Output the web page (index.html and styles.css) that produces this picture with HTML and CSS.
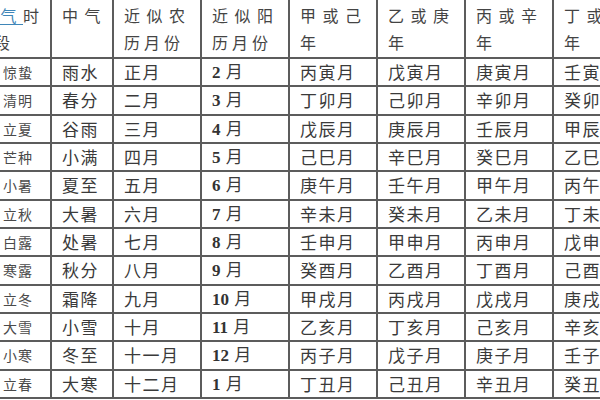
FILE: index.html
```html
<!DOCTYPE html>
<html lang="zh">
<head>
<meta charset="utf-8">
<title>节气月份表</title>
<link rel="stylesheet" href="styles.css">
</head>
<body>
<table class="grid">
  <colgroup>
    <col class="c-first">
    <col class="c-mid">
    <col class="c-std">
    <col class="c-std">
    <col class="c-std">
    <col class="c-std">
    <col class="c-std">
    <col class="c-std">
  </colgroup>
  <thead>
    <tr class="head">
      <th class="h-first"><span class="l1"><a class="link" href="#">节气</a>时</span><span class="l2 l2-first">段</span></th>
      <th><span class="l1">中气</span><span class="l2">&nbsp;</span></th>
      <th><span class="l1">近似农</span><span class="l2">历月份</span></th>
      <th><span class="l1">近似阳</span><span class="l2">历月份</span></th>
      <th><span class="l1">甲或己</span><span class="l2">年</span></th>
      <th><span class="l1">乙或庚</span><span class="l2">年</span></th>
      <th><span class="l1">丙或辛</span><span class="l2">年</span></th>
      <th><span class="l1">丁或戊</span><span class="l2">年</span></th>
    </tr>
  </thead>
  <tbody>
    <tr><td class="jie">惊蛰</td><td>雨水</td><td>正月</td><td><span class="num">2</span> 月</td><td>丙寅月</td><td>戊寅月</td><td>庚寅月</td><td>壬寅月</td></tr>
    <tr><td class="jie">清明</td><td>春分</td><td>二月</td><td><span class="num">3</span> 月</td><td>丁卯月</td><td>己卯月</td><td>辛卯月</td><td>癸卯月</td></tr>
    <tr><td class="jie">立夏</td><td>谷雨</td><td>三月</td><td><span class="num">4</span> 月</td><td>戊辰月</td><td>庚辰月</td><td>壬辰月</td><td>甲辰月</td></tr>
    <tr><td class="jie">芒种</td><td>小满</td><td>四月</td><td><span class="num">5</span> 月</td><td>己巳月</td><td>辛巳月</td><td>癸巳月</td><td>乙巳月</td></tr>
    <tr><td class="jie">小暑</td><td>夏至</td><td>五月</td><td><span class="num">6</span> 月</td><td>庚午月</td><td>壬午月</td><td>甲午月</td><td>丙午月</td></tr>
    <tr><td class="jie">立秋</td><td>大暑</td><td>六月</td><td><span class="num">7</span> 月</td><td>辛未月</td><td>癸未月</td><td>乙未月</td><td>丁未月</td></tr>
    <tr><td class="jie">白露</td><td>处暑</td><td>七月</td><td><span class="num">8</span> 月</td><td>壬申月</td><td>甲申月</td><td>丙申月</td><td>戊申月</td></tr>
    <tr><td class="jie">寒露</td><td>秋分</td><td>八月</td><td><span class="num">9</span> 月</td><td>癸酉月</td><td>乙酉月</td><td>丁酉月</td><td>己酉月</td></tr>
    <tr><td class="jie">立冬</td><td>霜降</td><td>九月</td><td><span class="num">10</span> 月</td><td>甲戌月</td><td>丙戌月</td><td>戊戌月</td><td>庚戌月</td></tr>
    <tr><td class="jie">大雪</td><td>小雪</td><td>十月</td><td><span class="num">11</span> 月</td><td>乙亥月</td><td>丁亥月</td><td>己亥月</td><td>辛亥月</td></tr>
    <tr><td class="jie">小寒</td><td>冬至</td><td>十一月</td><td><span class="num">12</span> 月</td><td>丙子月</td><td>戊子月</td><td>庚子月</td><td>壬子月</td></tr>
    <tr><td class="jie">立春</td><td>大寒</td><td>十二月</td><td><span class="num">1</span> 月</td><td>丁丑月</td><td>己丑月</td><td>辛丑月</td><td>癸丑月</td></tr>
  </tbody>
</table>
</body>
</html>
```

FILE: styles.css
```css
html, body {
  margin: 0;
  padding: 0;
  background: #ffffff;
  overflow: hidden;
}

body {
  font-family: "Noto Sans CJK SC", "Noto Sans CJK JP", sans-serif;
  color: #3a3a3a;
}

.grid {
  border-collapse: collapse;
  table-layout: fixed;
  width: 672px;
  margin-left: -34px;
  margin-top: -3px;
}

.c-first { width: 84px; }
.c-mid { width: 62px; }
.c-std { width: 88px; }

.grid th,
.grid td {
  border: 2px solid #5c5c5c;
  padding: 0 0 0 10px;
  text-align: left;
  vertical-align: middle;
  white-space: nowrap;
  overflow: hidden;
}

.head {
  height: 60px;
}

.grid th {
  font-weight: 400;
  font-size: 16px;
  line-height: 27px;
  color: #444444;
  padding-top: 2px;
}

.l1 {
  display: block;
  letter-spacing: 6.5px;
}

.l2 {
  display: block;
  letter-spacing: 4px;
}

.l2-first {
  padding-left: 16px;
}

.link {
  color: #3f86b8;
  text-decoration: underline;
  text-underline-offset: 2px;
}

.grid tbody tr {
  height: 28.33px;
}

.grid td {
  font-size: 17px;
  line-height: 20px;
  letter-spacing: 1.5px;
}

.grid td.jie {
  font-size: 14px;
  letter-spacing: 1px;
  text-align: right;
  padding-right: 17px;
  padding-left: 0;
  color: #4a4a4a;
}

.num {
  font-family: "Liberation Serif", serif;
  font-weight: 700;
  letter-spacing: 0;
  color: #333333;
}
```
